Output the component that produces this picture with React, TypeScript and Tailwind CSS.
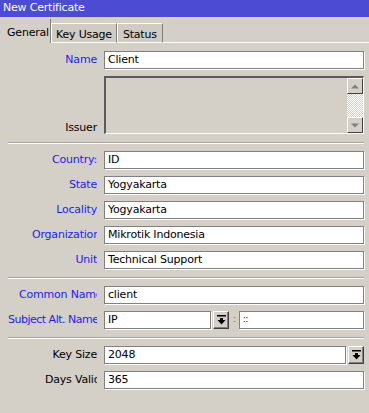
import type { ReactNode } from 'react'

const blue = 'text-[#1c1cf6]'

const DropIcon = () => (
  <svg width="9" height="10" viewBox="0 0 9 10" className="block">
    <rect x="0" y="0" width="9" height="1.5" fill="#000" />
    <rect x="3" y="3" width="3" height="2" fill="#000" />
    <polygon points="0.5,5 8.5,5 4.5,9.5" fill="#000" />
  </svg>
)

const DropButton = () => (
  <div className="flex h-[18px] w-[16px] shrink-0 items-center justify-center border-t border-l border-white border-r border-b border-r-[#404040] border-b-[#404040] bg-[#d4d0c8] shadow-[inset_-1px_-1px_0_#808080]">
    <DropIcon />
  </div>
)

const Field = ({ value, className = '' }: { value: string; className?: string }) => (
  <div
    className={`flex h-[18px] items-center border border-[#808080] bg-white pl-[3px] text-black shadow-[1px_1px_0_#fff] ${className}`}
  >
    {value}
  </div>
)

const Row = ({
  label,
  color = blue,
  clip,
  children,
}: {
  label: string
  color?: string
  clip?: string
  children: ReactNode
}) => (
  <div className="flex h-[18px] items-center">
    <div className="flex w-[89px] shrink-0 justify-end">
      <span className={`overflow-hidden whitespace-nowrap ${color} ${clip ?? ''}`}>{label}</span>
    </div>
    <div className="ml-[7px] flex flex-1 items-center">{children}</div>
  </div>
)

const Separator = () => (
  <div className="mt-[8px] mb-[7px] h-[2px] border-t border-[#a9a59d] border-b border-b-white" />
)

const ScrollBtn = ({ up }: { up?: boolean }) => (
  <div className="flex h-[16px] w-[16px] items-center justify-center border-t border-l border-white border-r border-b border-r-[#404040] border-b-[#404040] bg-[#d4d0c8]">
    <svg width="8" height="5" viewBox="0 0 8 5">
      <polygon points={up ? '0,4.5 8,4.5 4,0.5' : '0,0.5 8,0.5 4,4.5'} fill="#808080" />
    </svg>
  </div>
)

export default function App() {
  return (
    <div className="h-[413px] w-[369px] overflow-hidden bg-[#d4d0c8] font-['DejaVu_Sans',sans-serif] text-[11px] tracking-[-0.2px] text-black">
      <div className="flex h-[17px] items-center bg-[#4b4bd3] pl-[3px] text-white">New Certificate</div>

      <div className="flex h-[26px] items-end pl-[3px]">
        <div className="flex h-[24px] w-[48px] items-start border-r border-[#808080] pt-[6px] pl-[4px]">General</div>
        <div className="flex h-[20px] items-start border-t border-l border-b border-white border-r border-r-[#808080] bg-[#d0ccc4] px-[4px] pt-[3px]">
          Key Usage
        </div>
        <div className="flex h-[20px] items-start border-t border-l border-b border-white border-r border-r-[#808080] bg-[#d0ccc4] px-[5px] pt-[3px]">
          Status
        </div>
        <div className="h-[1px] flex-1 bg-white" />
      </div>

      <div className="flex flex-col pt-[8px] pr-[5px] pl-[8px]">
        <div className="flex flex-col gap-[7px]">
          <Row label="Name">
            <Field value="Client" className="flex-1" />
          </Row>
          <div className="flex h-[58px]">
            <div className="flex w-[89px] shrink-0 items-end justify-end leading-[13px]">Issuer</div>
            <div className="ml-[7px] flex flex-1 justify-end border-t-2 border-l-2 border-[#5a5a5a] border-r border-b border-r-white border-b-white bg-[#d4d0c8]">
              <div className="flex w-[16px] flex-col">
                <ScrollBtn up />
                <div className="flex-1 bg-[repeating-conic-gradient(#ffffff_0%_25%,#d4d0c8_0%_50%)] bg-[length:2px_2px]" />
                <ScrollBtn />
              </div>
            </div>
          </div>
        </div>

        <Separator />

        <div className="flex flex-col gap-[7px]">
          <Row label="Country:">
            <Field value="ID" className="flex-1" />
          </Row>
          <Row label="State">
            <Field value="Yogyakarta" className="flex-1" />
          </Row>
          <Row label="Locality">
            <Field value="Yogyakarta" className="flex-1" />
          </Row>
          <Row label="Organization" clip="w-[65px]">
            <Field value="Mikrotik Indonesia" className="flex-1" />
          </Row>
          <Row label="Unit">
            <Field value="Technical Support" className="flex-1" />
          </Row>
        </div>

        <Separator />

        <div className="flex flex-col gap-[7px]">
          <Row label="Common Name" clip="w-[78px]">
            <Field value="client" className="flex-1" />
          </Row>
          <Row label="Subject Alt. Name" clip="w-[89px] tracking-[-0.5px]">
            <Field value="IP" className="w-[107px]" />
            <div className="ml-[2px]">
              <DropButton />
            </div>
            <span className="ml-[4px] w-[5px] text-[9px] text-[#7a6a5a]">:</span>
            <Field value="::" className="ml-[1px] flex-1 text-[8px]" />
          </Row>
        </div>

        <Separator />

        <div className="flex flex-col gap-[7px]">
          <Row label="Key Size" color="text-black">
            <Field value="2048" className="flex-1" />
            <div className="ml-[2px]">
              <DropButton />
            </div>
          </Row>
          <Row label="Days Valid" color="text-black" clip="w-[52px]">
            <Field value="365" className="flex-1" />
          </Row>
        </div>
      </div>
    </div>
  )
}
